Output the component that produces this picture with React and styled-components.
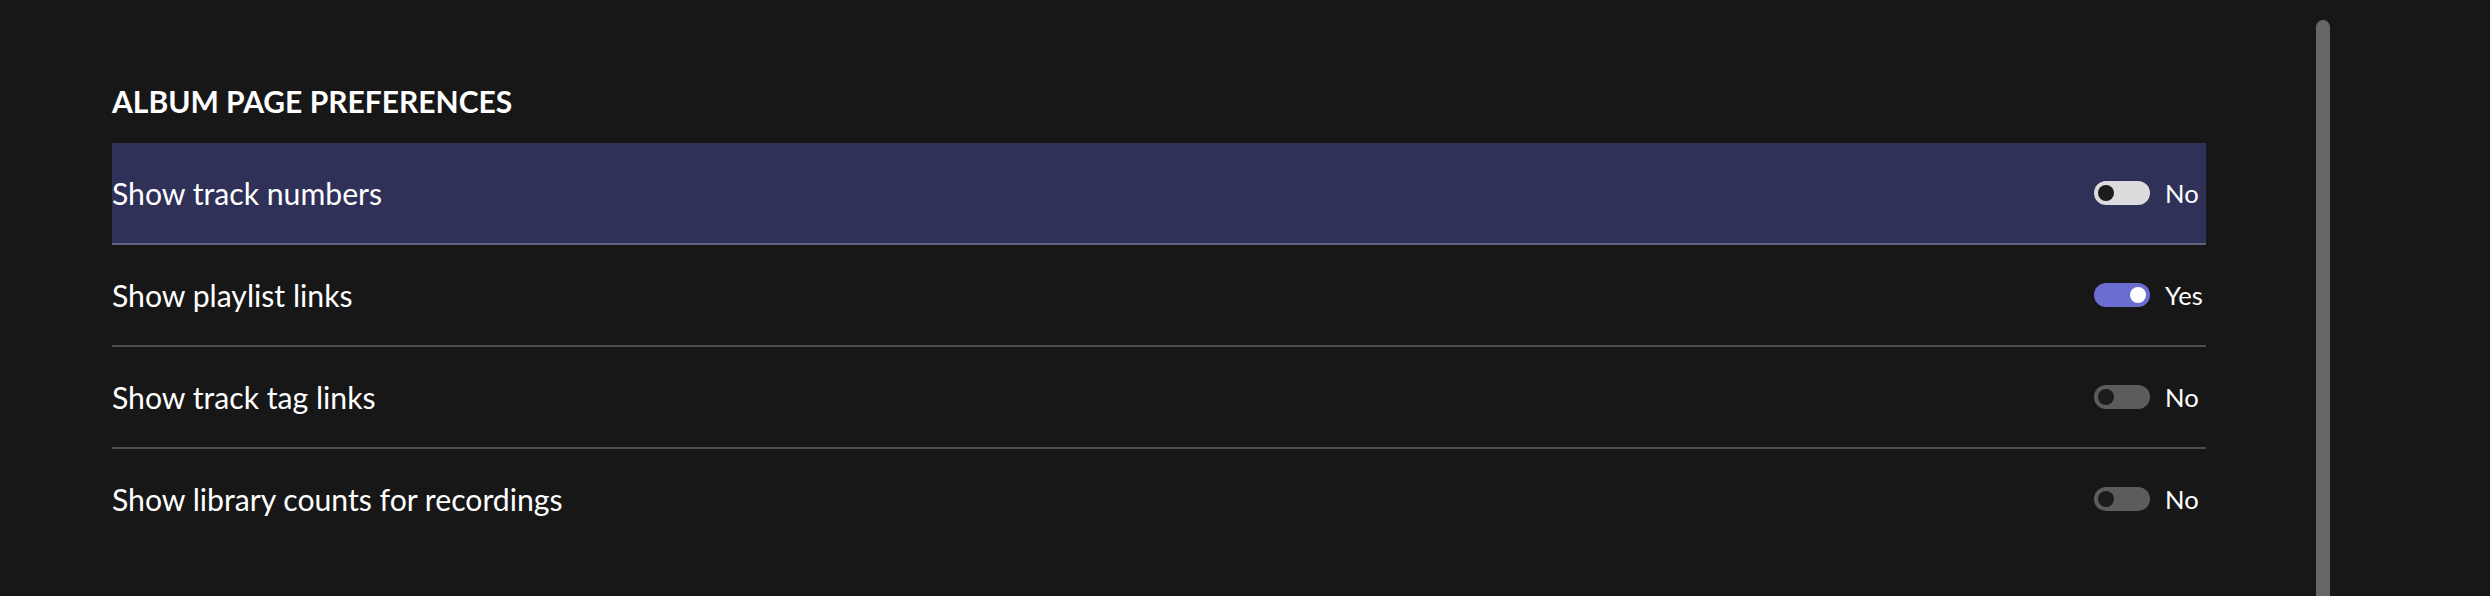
import styled, { createGlobalStyle } from 'styled-components';

const GlobalStyle = createGlobalStyle`
    html, body {
        margin: 0;
        padding: 0;
        background-color: #171717;
        color: #ffffff;
        font-family: Lato, "Noto Sans", sans-serif;
        overflow: hidden;
    }
`;

const Page = styled.div`
    display: flex;
    flex-direction: row;
    height: 596px;
`;

const Content = styled.div`
    display: flex;
    flex-direction: column;
    padding: 83px 0 0 112px;
    width: 2094px;
`;

const Heading = styled.h2`
    margin: 0 0 24px 0;
    font-size: 30px;
    font-weight: 700;
    line-height: 1.2;
`;

const List = styled.div`
    display: flex;
    flex-direction: column;
`;

const Row = styled.div`
    display: flex;
    flex-direction: row;
    align-items: center;
    justify-content: space-between;
    box-sizing: border-box;
    height: 102px;
    padding-top: 1px;
    background-color: ${props => props.$active ? '#2f3159' : 'transparent'};
    border-bottom: 2px solid rgba(255, 255, 255, 0.24);

    &:last-child {
        height: 100px;
        border-bottom: none;
    }
`;

const RowLabel = styled.span`
    font-size: 30.2px;
    line-height: 1.2;
`;

const Control = styled.div`
    display: flex;
    flex-direction: row;
    align-items: center;
    gap: 15px;
`;

const Track = styled.div`
    display: flex;
    align-items: center;
    justify-content: ${props => props.$on ? 'flex-end' : 'flex-start'};
    box-sizing: border-box;
    width: 56px;
    height: 24px;
    padding: 0 4px;
    border-radius: 12px;
    background-color: ${props => props.$on ? '#6b6dd0' : props.$light ? '#dcdcde' : '#5c5c5c'};
`;

const Knob = styled.div`
    width: 16px;
    height: 16px;
    border-radius: 50%;
    background-color: ${props => props.$on ? '#ffffff' : '#1c1c1c'};
`;

const ValueText = styled.span`
    width: 41px;
    font-size: 25.6px;
    line-height: 1.2;
`;

const ScrollThumb = styled.div`
    margin: 20px 0 0 110px;
    width: 14px;
    flex-shrink: 0;
    border-radius: 7px 7px 0 0;
    background-color: #666666;
`;

const prefs = [
    { label: 'Show track numbers', on: false, active: true },
    { label: 'Show playlist links', on: true },
    { label: 'Show track tag links', on: false },
    { label: 'Show library counts for recordings', on: false },
];

const App = () => {
    return (
        <>
            <GlobalStyle />
            <Page>
                <Content>
                    <Heading>ALBUM PAGE PREFERENCES</Heading>
                    <List>
                        {prefs.map(item => (
                            <Row key={item.label} $active={item.active}>
                                <RowLabel>{item.label}</RowLabel>
                                <Control>
                                    <Track $on={item.on} $light={item.active}>
                                        <Knob $on={item.on} />
                                    </Track>
                                    <ValueText>{item.on ? 'Yes' : 'No'}</ValueText>
                                </Control>
                            </Row>
                        ))}
                    </List>
                </Content>
                <ScrollThumb />
            </Page>
        </>
    );
}

export default App
